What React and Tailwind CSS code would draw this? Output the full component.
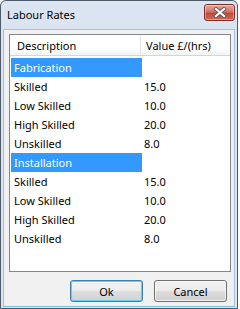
const groups = [
  {
    name: "Fabrication",
    rows: [
      ["Skilled", "15.0"],
      ["Low Skilled", "10.0"],
      ["High Skilled", "20.0"],
      ["Unskilled", "8.0"],
    ],
  },
  {
    name: "Installation",
    rows: [
      ["Skilled", "15.0"],
      ["Low Skilled", "10.0"],
      ["High Skilled", "20.0"],
      ["Unskilled", "8.0"],
    ],
  },
];

function CloseButton() {
  return (
    <button className="mt-[3px] w-[31px] h-[17px] flex items-center justify-center rounded-[3px] border border-[#7e2f28] bg-[linear-gradient(#e8aa9e,#d07565_45%,#c04a39_55%,#d06a58)] shadow-[inset_0_0_0_1px_rgba(255,255,255,0.35)]">
      <svg width="14" height="11" viewBox="0 0 14 11">
        <path d="M3 2 L11 9 M11 2 L3 9" stroke="#5a5a5a" strokeWidth="4" strokeLinecap="square" />
        <path d="M3 2 L11 9 M11 2 L3 9" stroke="#ffffff" strokeWidth="2.2" strokeLinecap="square" />
      </svg>
    </button>
  );
}

function Row({ label, value, selected }) {
  return (
    <div className="flex h-[19px] items-center">
      <div
        className={
          "w-[131px] h-full flex items-center pl-[3px] " +
          (selected ? "bg-[#3399ff] text-white" : "text-black")
        }
      >
        {label}
      </div>
      <div className="pl-[2px] text-black">{value}</div>
    </div>
  );
}

export default function App() {
  return (
    <div className="w-[240px] h-[309px] bg-white font-['Segoe_UI','Noto_Sans',sans-serif] text-[11px] leading-none">
      <div className="w-[238px] h-[309px] flex flex-col rounded-t-[6px] border border-[#4f5a68] bg-[#dbe5f1]">
        <div className="h-[28px] flex items-start justify-between pl-[6px] pr-[2px]">
          <span className="mt-[8px] text-black">Labour Rates</span>
          <CloseButton />
        </div>

        <div className="flex-1 mx-[2px] mb-[1px] flex flex-col bg-[#f0f0f0] border border-[#a7c4de] border-b-[#79c1ea] border-l-[#8ec6ea] pl-[5px] pt-[4px]">
          <div className="w-[222px] h-[238px] border border-[#828790] bg-white">
            <div className="flex h-[21px] border-b border-[#d5d5d5] bg-[linear-gradient(#ffffff,#ffffff_60%,#f3f4f6)]">
              <div className="w-[131px] flex items-center pl-[7px] border-r border-[#e3e5e8]">Description</div>
              <div className="flex items-center pl-[5px]">Value £/(hrs)</div>
            </div>
            <div className="pt-[2px] pl-[1px]">
              {groups.map((g) => (
                <div key={g.name}>
                  <Row label={g.name} value="" selected />
                  {g.rows.map(([l, v], i) => (
                    <Row key={i} label={l} value={v} />
                  ))}
                </div>
              ))}
            </div>
          </div>

          <div className="flex gap-[11px] mt-[8px] pl-[61px]">
            <button className="w-[73px] h-[22px] rounded-[3px] border border-[#3c7fb1] bg-[linear-gradient(#f4f4f4,#ececec_50%,#dedede_51%,#d2d2d2)] shadow-[inset_0_0_0_1px_#5fd0f5] text-black">
              Ok
            </button>
            <button className="w-[73px] h-[22px] rounded-[3px] border border-[#707070] bg-[linear-gradient(#f2f2f2,#ebebeb_50%,#dddddd_51%,#cfcfcf)] shadow-[inset_0_0_0_1px_rgba(255,255,255,0.7)] text-black">
              Cancel
            </button>
          </div>
        </div>
      </div>
    </div>
  );
}
